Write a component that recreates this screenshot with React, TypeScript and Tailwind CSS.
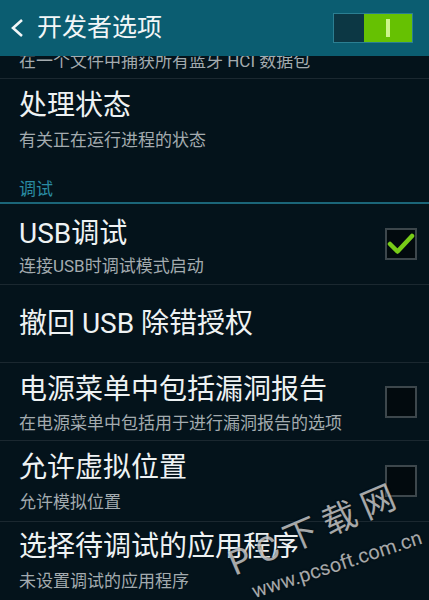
const font = "font-['Roboto','Noto_Sans_CJK_SC',sans-serif]";

function CheckBox({ checked }: { checked?: boolean }) {
  return (
    <div className="w-[32px] h-[32px] shrink-0 border-2 border-[#3d474c] bg-[#020a0e] flex items-center justify-center">
      {checked && (
        <svg width="28" height="24" viewBox="0 0 28 24">
          <path d="M3 12 L10.5 19.5 L25 4" fill="none" stroke="#78cc18" strokeWidth="4.5" strokeLinecap="round" strokeLinejoin="round" />
        </svg>
      )}
    </div>
  );
}

interface RowProps {
  title: string;
  sub?: string;
  check?: boolean;
  checked?: boolean;
  pt: string;
  gap: string;
  pb: string;
  border?: boolean;
}

function Row({ title, sub, check, checked, pt, gap, pb, border = true }: RowProps) {
  return (
    <div className={`flex items-center pl-[19px] pr-[12px] ${border ? "border-b border-[#1b2830]" : ""}`}>
      <div className={`flex-1 flex flex-col ${pt} ${pb}`}>
        <div className="text-[28px] leading-[32px] text-[#eef2f3] whitespace-nowrap">{title}</div>
        {sub && <div className={`text-[17px] leading-[20px] text-[#a3abaf] whitespace-nowrap ${gap}`}>{sub}</div>}
      </div>
      {check && <CheckBox checked={checked} />}
    </div>
  );
}

export default function App() {
  return (
    <div className={`relative w-[429px] h-[600px] overflow-hidden bg-[#04131b] ${font}`}>
      <div className="h-[56px] bg-[#0b5d71] flex items-center pl-[9px] pr-[16px]">
        <svg width="17" height="20" viewBox="0 0 17 20" className="shrink-0">
          <path d="M13 2 L4 10 L13 18" fill="none" stroke="#f2f6f7" strokeWidth="2.6" />
        </svg>
        <div className="ml-[11px] text-[25px] leading-[30px] text-[#f2f6f7] flex-1">开发者选项</div>
        <div className="w-[80px] h-[30px] border border-[#2b7f92] flex">
          <div className="w-[30px] bg-[#0c3744]" />
          <div className="flex-1 bg-[#66c102] flex items-center justify-center">
            <div className="w-[4px] h-[18px] bg-[#cdf58c]" />
          </div>
        </div>
      </div>

      <div className="h-[23px] overflow-hidden border-b border-[#1b2830] pl-[19px]">
        <div className="-mt-[5px] text-[17px] leading-[20px] text-[#a3abaf] whitespace-nowrap">在一个文件中捕获所有蓝牙 HCI 数据包</div>
      </div>

      <Row title="处理状态" sub="有关正在运行进程的状态" pt="pt-[11px]" gap="mt-[8px]" pb="pb-[9px]" border={false} />

      <div className="pl-[19px] pt-[20px] pb-[3px] border-b-2 border-[#1b6679] text-[17px] leading-[20px] text-[#2a8ba2]">调试</div>

      <Row title="USB调试" sub="连接USB时调试模式启动" check checked pt="pt-[14px]" gap="mt-[6px]" pb="pb-[8px]" />
      <div className="h-[78px] flex items-center pl-[19px] border-b border-[#1b2830]">
        <div className="text-[28px] leading-[32px] text-[#eef2f3]">撤回 USB 除错授权</div>
      </div>
      <Row title="电源菜单中包括漏洞报告" sub="在电源菜单中包括用于进行漏洞报告的选项" check pt="pt-[11px]" gap="mt-[7px]" pb="pb-[7px]" />
      <Row title="允许虚拟位置" sub="允许模拟位置" check pt="pt-[11px]" gap="mt-[8px]" pb="pb-[9px]" />
      <Row title="选择待调试的应用程序" sub="未设置调试的应用程序" pt="pt-[9px]" gap="mt-[8px]" pb="pb-[9px]" border={false} />

      <div className="absolute left-[238px] top-[543px] origin-bottom-left -rotate-[23deg] text-[34px] leading-[40px] tracking-[8px] text-white/65 whitespace-nowrap [text-shadow:0_0_2px_rgba(0,0,0,0.8)]">
        PC下载网
      </div>
      <div className="absolute left-[256px] top-[579px] origin-bottom-left -rotate-[18deg] text-[20px] leading-[24px] text-white/65 whitespace-nowrap [text-shadow:0_0_2px_rgba(0,0,0,0.8)]">
        www.pcsoft.com.cn
      </div>
    </div>
  );
}
